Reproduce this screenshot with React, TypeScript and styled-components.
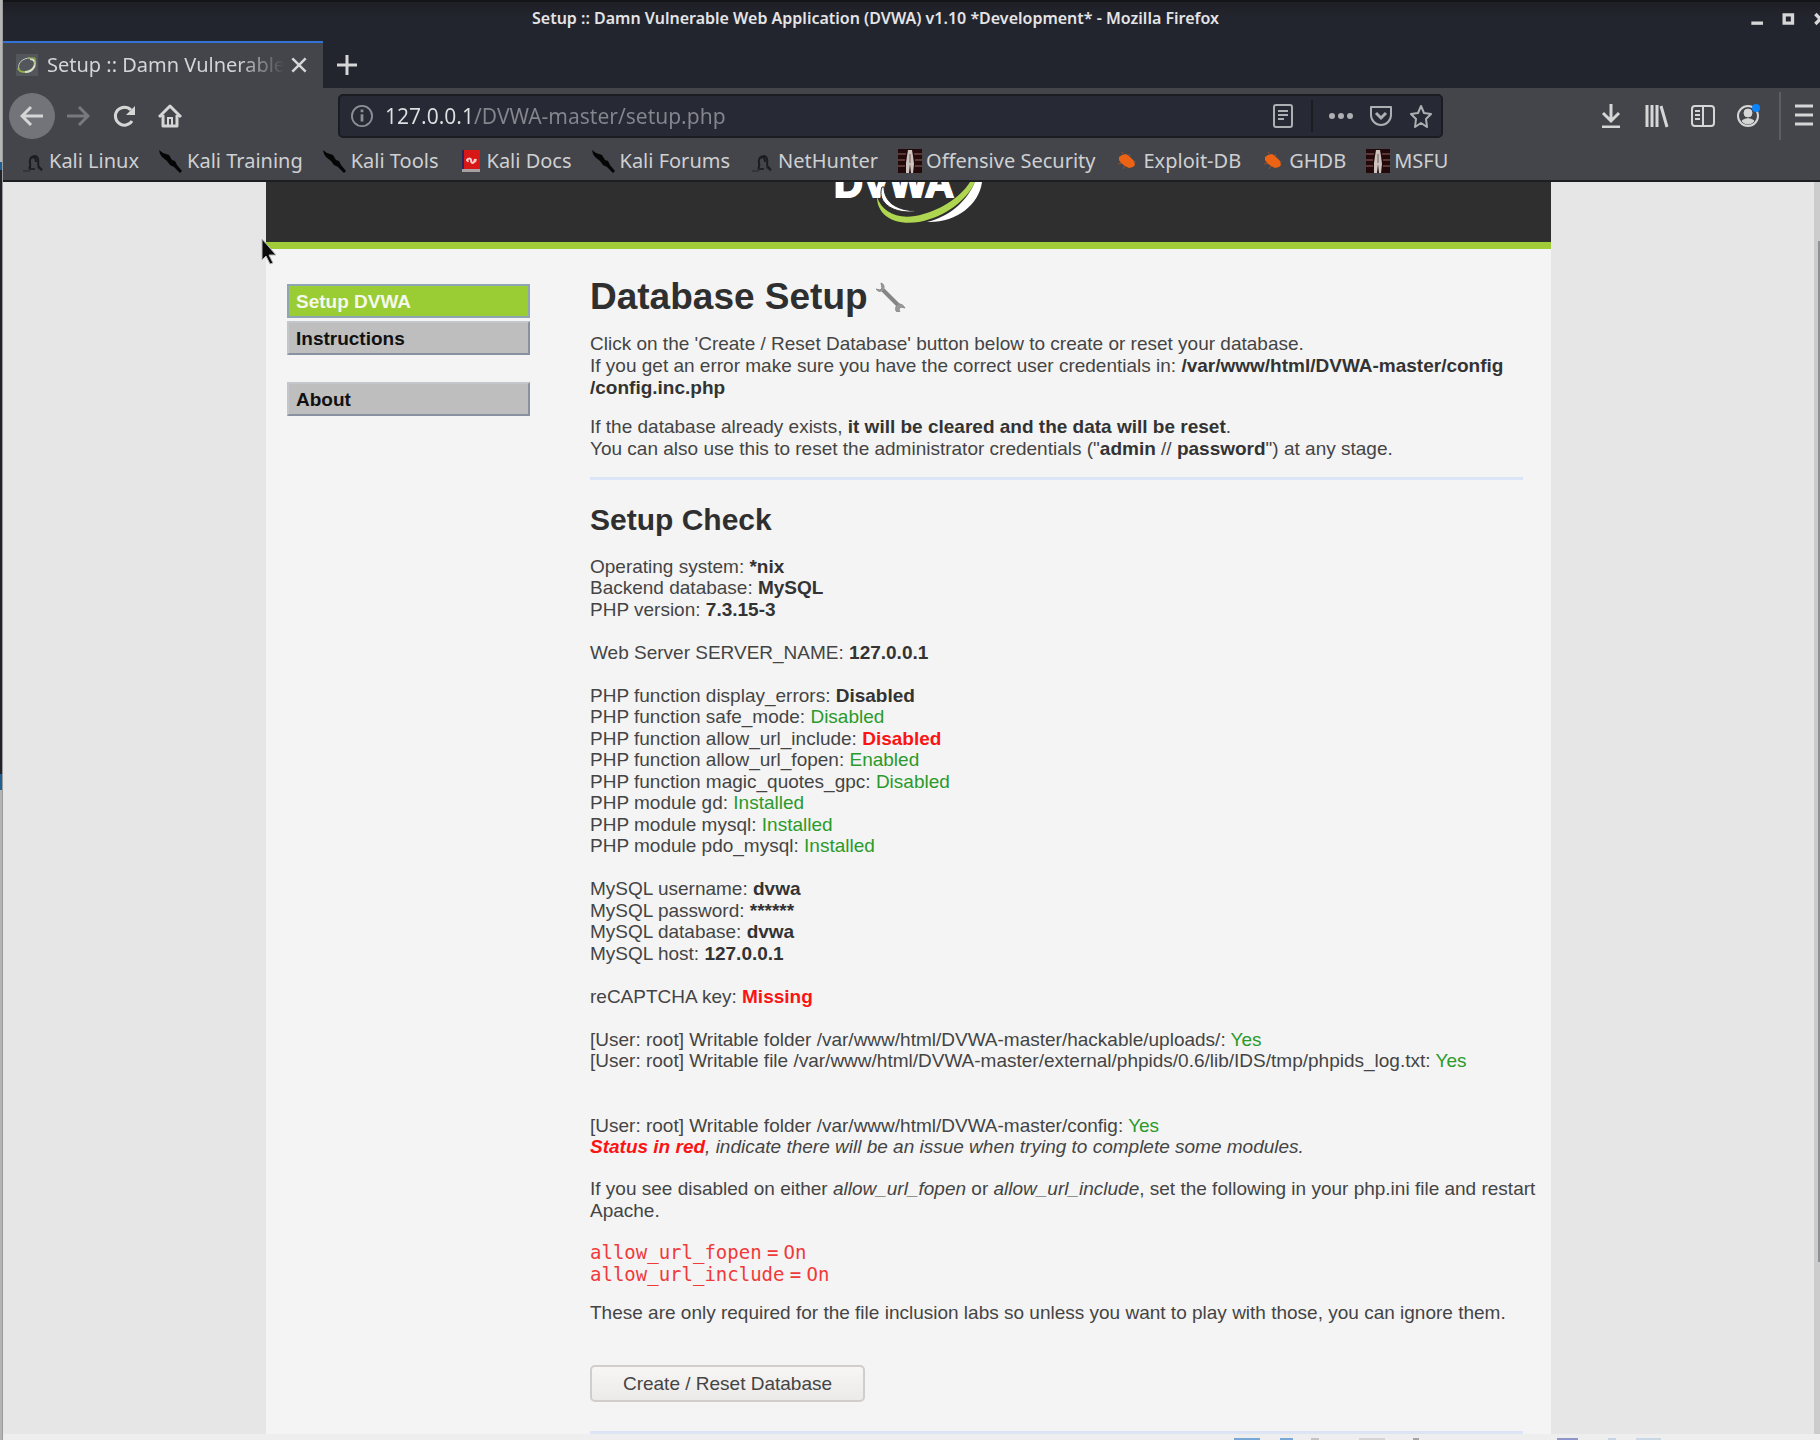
import React from "react";
import styled, { createGlobalStyle, css } from "styled-components";

const ui = `"Noto Sans", "Open Sans", sans-serif`;
const sans = `"Liberation Sans", Arial, Helvetica, sans-serif`;
const mono = `"DejaVu Sans Mono", monospace`;

const GlobalStyle = createGlobalStyle`
  *, *::before, *::after { box-sizing: border-box; }
  body { margin: 0; background: #e6e6e6; font-family: ${sans}; }
`;

/* ---------- desktop and window frame ---------- */

const Desktop = styled.div`
  display: grid;
  grid-template-columns: 3px minmax(0, 1fr);
  height: 100vh;
  overflow: hidden;
`;

const BehindWindow = styled.div`
  border-right: 1px solid #9b9b9b;
  background: linear-gradient(
    to bottom,
    #b5b5b5 0 162px,
    #1d5f92 162px 170px,
    #20222c 170px 774px,
    #1f6193 774px 790px,
    #b4b4b4 790px
  );
`;

const Window = styled.div`
  display: flex;
  flex-direction: column;
  min-height: 0;
`;

const TitleBar = styled.header`
  display: grid;
  grid-template-columns: 1fr auto 1fr 72px;
  align-items: center;
  height: 37px;
  padding-bottom: 3px;
  border-top: 2px solid #131418;
  background: linear-gradient(#1e1f25, #23252e 16px);
  color: #e4e4e6;
`;

const WindowTitle = styled.h1`
  grid-column: 2;
  margin: 0;
  font: 600 16px/24px ${ui};
  white-space: nowrap;
`;

const WindowButtons = styled.div`
  display: flex;
  grid-column: 3 / 5;
  justify-content: flex-end;
  gap: 12px;
  margin-right: -12px;
  padding-top: 2px;
  overflow: hidden;
`;

const IconButton = styled.button<{ $size?: number; $round?: boolean; $tone?: string }>`
  display: inline-flex;
  flex: none;
  align-items: center;
  justify-content: center;
  width: ${(p) => p.$size ?? 46}px;
  height: ${(p) => p.$size ?? 46}px;
  padding: 0;
  border: 0;
  border-radius: ${(p) => (p.$round ? "50%" : "0")};
  background: ${(p) => (p.$round ? "#737479" : "none")};
  color: ${(p) => p.$tone ?? "#d6d6d7"};
`;

const TabStrip = styled.div`
  display: flex;
  align-items: stretch;
  height: 51px;
  padding-top: 4px;
  background: #23252e;
`;

const Tab = styled.div`
  display: flex;
  align-items: center;
  width: 320px;
  padding: 0 10px 2px 13px;
  border-top: 2px solid #3273d8;
  background: #43454b;
  color: #d4d5d7;
`;

const TabLabel = styled.span`
  flex: 1;
  margin-left: 9px;
  overflow: hidden;
  font: 20px/28px ${ui};
  white-space: nowrap;
  mask-image: linear-gradient(to right, #000 80%, transparent);
`;

const NavBar = styled.nav`
  display: flex;
  align-items: center;
  height: 56px;
  padding-left: 6px;
  background: #43454b;
`;

const UrlBar = styled.div`
  display: flex;
  flex: 1;
  align-items: center;
  height: 44px;
  margin: 0 145px;
  padding: 0 0 0 11px;
  border: 2px solid #1b1c21;
  border-radius: 5px;
  background: #272934;
  color: #8e8f95;
`;

const UrlInput = styled.input`
  flex: 1;
  min-width: 0;
  margin-left: 12px;
  padding: 0;
  border: 0;
  outline: 0;
  background: linear-gradient(to right, #dfe0e3 88px, #85868d 88px);
  background-clip: text;
  color: transparent;
  font: 21px/30px ${ui};
`;

const Divider = styled.span<{ $light?: boolean }>`
  flex: none;
  width: 2px;
  height: ${(p) => (p.$light ? 48 : 32)}px;
  background: ${(p) => (p.$light ? "#5c5e64" : "#1b1c22")};
`;

const ReaderSlot = styled.span`
  display: flex;
  gap: 8px;
  align-items: center;
  padding-right: 8px;
`;

const MenuSlot = styled.span`
  display: flex;
  padding-left: 3px;
  margin: 0 -7px 0 4px;
`;

const Bookmarks = styled.nav`
  display: flex;
  align-items: center;
  gap: 20px;
  height: 38px;
  padding: 0 0 2px 18px;
  border-bottom: 2px solid #1d1e21;
  background: #43454b;
`;

const Bookmark = styled.a`
  display: flex;
  align-items: center;
  gap: 4px;
  color: #cfd0d2;
  font: 20px/28px ${ui};
  text-decoration: none;
  white-space: nowrap;
`;

/* ---------- web page ---------- */

const Viewport = styled.div`
  display: grid;
  flex: 1;
  grid-template-columns: minmax(0, 1fr) 6px;
  min-height: 0;
  overflow: hidden;
  background: #e6e6e6;
`;

const ScrollTrack = styled.div`
  display: flex;
  justify-content: flex-end;
  padding-top: 59px;
  background: #cdcccc;
`;

const ScrollThumb = styled.div`
  width: 2px;
  height: 1021px;
  background: #8e9194;
`;

const Site = styled.div`
  max-width: 1285px;
  width: 100%;
  min-height: 0;
  margin: 0 auto;
  background: #f4f4f4;
`;

const SiteHeader = styled.div`
  display: flex;
  justify-content: center;
  height: 67px;
  border-bottom: 7px solid #a0cc38;
  background: #2f2f2f;
`;

const SiteBody = styled.div`
  display: grid;
  grid-template-columns: 243px minmax(0, 1fr);
  column-gap: 60px;
  padding: 30px 28px 0 21px;
`;

const Menu = styled.nav`
  display: flex;
  flex-direction: column;
  gap: 27px;
  padding-top: 5px;
`;

const MenuGroup = styled.div`
  display: flex;
  flex-direction: column;
  gap: 3px;
`;

const MenuLink = styled.a<{ $active?: boolean }>`
  padding: 1px 7px 0;
  border: 2px solid #8c99ab;
  border-color: #c3c6ca #8791a0 #8791a0 #c3c6ca;
  background: #bebebe;
  color: #111;
  font: bold 19px/29px ${sans};
  text-decoration: none;
  ${(p) =>
    p.$active &&
    css`
      border-color: #8fa5b4;
      background: #9acc33;
      color: #f5f8ec;
    `}
`;

const Content = styled.main`
  color: #444;
  font: 19px/21px ${sans};
`;

const PageTitle = styled.h2`
  display: flex;
  align-items: center;
  gap: 8px;
  margin: 0 0 18px;
  color: #2f2f2f;
  font: bold 37px/36px ${sans};
`;

const SectionTitle = styled.h3`
  margin: 22px 0 18px;
  color: #2f2f2f;
  font: bold 30px/36px ${sans};
`;

const Paragraph = styled.div`
  margin-bottom: 17px;
  line-height: 22px;
  white-space: nowrap;
`;

const Rule = styled.hr`
  height: 3px;
  margin: 0;
  border: 0;
  background: #dbe5f5;
`;

const Lines = styled.div`
  margin-bottom: 20px;
  white-space: nowrap;
`;

const Line = styled.div`
  height: 21px;
  &:nth-child(even) {
    height: 22px;
  }
`;

const Strong = styled.b`
  color: #333;
`;

const Status = styled.span<{ $bad?: boolean }>`
  color: ${(p) => (p.$bad ? "#fb1414" : "#2a9a2a")};
  font-weight: ${(p) => (p.$bad ? "bold" : "normal")};
`;

const Config = styled.div`
  margin: 20px 0 16px;
  color: #f03a3a;
  line-height: 22px;
`;

const Code = styled.code`
  font: 19px/21px ${mono};
`;

const ResetButton = styled.button`
  display: block;
  width: 275px;
  height: 37px;
  margin: 41px 0 29px;
  border: 2px solid #d0cdca;
  border-radius: 5px;
  background: linear-gradient(#f7f6f5, #ebeae8);
  color: #444;
  font: 19px/22px ${sans};
`;

const Taskbar = styled.footer`
  display: flex;
  align-items: flex-end;
  height: 6px;
  padding-left: 1231px;
  background: #eee;
`;

const TaskMark = styled.span<{ $w: number; $gap: number; $c: string }>`
  flex: none;
  width: ${(p) => p.$w}px;
  height: 2px;
  margin-right: ${(p) => p.$gap}px;
  background: ${(p) => p.$c};
`;

const Pointer = styled.svg`
  position: absolute;
  left: 261px;
  top: 238px;
`;

/* ---------- icons ---------- */

const Glyph = ({ size = 24, w = 2, children }: { size?: number; w?: number; children: React.ReactNode }) => (
  <svg width={size} height={size} viewBox="0 0 24 24" fill="none" stroke="currentColor" strokeWidth={w} aria-hidden="true">
    {children}
  </svg>
);

const Dragon = () => (
  <svg width="24" height="24" viewBox="0 0 24 24" fill="none" aria-hidden="true">
    <path d="M2 22h6l2-3M21 22l-5-4" stroke="#33353b" strokeWidth="2" />
    <path d="M8 20c3-4 0-5 1-9 1-5 7-5 8-1 1 3-1 5 1 8l3 3M10 9c3-2 5 0 5 4" stroke="#1b1c20" strokeWidth="2" />
    <path d="M8 20h6" stroke="#222328" strokeWidth="2" />
  </svg>
);

const Dagger = () => (
  <svg width="24" height="24" viewBox="0 0 24 24" aria-hidden="true">
    <path d="M0 1l4 3 6 2 3 5 3 1 2 4 5 6-2 2-6-6-4-2-3-4-5-4-2-3z" fill="#050505" />
  </svg>
);

const RedBook = () => (
  <svg width="24" height="24" viewBox="0 0 24 24" aria-hidden="true">
    <path d="M3 1h18v19H3z" fill="#d81717" />
    <path d="M3 1h2v19H3z" fill="#28255b" />
    <path d="M3 20h18v3H3z" fill="#a9a0a3" />
    <path d="M8 12c0-3 4-3 4-1s1 4 3 2l1-3M8 10l1 3M16 13l1-3" fill="none" stroke="#f6cccc" strokeWidth="2" />
  </svg>
);

const Figure = () => (
  <svg width="24" height="24" viewBox="0 0 24 24" aria-hidden="true">
    <path d="M0 0h24v24H0z" fill="#230a0a" />
    <path d="M0 5h8M16 5h8M0 11h7M17 11h7M0 17h7M17 17h7" stroke="#5a3636" strokeWidth="2" />
    <path d="M10 1h4l1 6 1 8-1 9h-2l-1-9-1 9H8V14l1-7z" fill="#cfc5c0" />
    <path d="M12 5v9" stroke="#6d5b57" />
  </svg>
);

const Bug = () => (
  <svg width="24" height="24" viewBox="0 0 24 24" aria-hidden="true">
    <path d="M4 8l3-2 4-1 3 2 3 3 2 2 1 4-2 2-4 1-4-2-4-3-2-3z" fill="#ec6413" />
    <path d="M7 3l2 3M14 5l1 2M3 15l4-1M8 20l2-3M21 13h-2" stroke="#8f5234" strokeWidth="1" />
  </svg>
);

const Logo = () => (
  <svg width="150" height="60" viewBox="0 0 150 60" role="img" aria-label="DVWA">
    <text x="0" y="15" fontFamily="Liberation Sans" fontWeight="bold" fontSize="40" fill="#fff" stroke="#fff" strokeWidth="2">
      DVWA
    </text>
    <path d="M50 5c0 7 3 13 8 17 7 5 16 7 27 7-15 3-29-1-35-9-3-4-4-9-2-15z" fill="#fff" stroke="#2f2f2f" strokeWidth="1" />
    <path d="M43 15c5 14 18 22 38 19 23-4 45-18 55-34h5c-8 18-30 35-56 40-25 4-42-7-42-25z" fill="#afd650" />
    <path d="M148 0c-3 23-26 41-55 40 21-5 39-19 48-40z" fill="#fff" />
  </svg>
);

const Wrench = () => (
  <svg width="30" height="30" viewBox="0 0 30 30" aria-hidden="true">
    <path d="M7 8l16 16" stroke="#858585" strokeWidth="4" />
    <path d="M5 1c3 1 4 4 2 7-2 2-5 2-7-1l4 1 2-2zM20 29c-1-3 0-6 3-7 3 0 5 2 6 4l-4-1-2 2 1 4z" fill="#999" stroke="#8b8b8b" strokeWidth="1" />
  </svg>
);

/* ---------- data ---------- */

const bookmarks: [string, () => React.ReactElement][] = [
  ["Kali Linux", Dragon],
  ["Kali Training", Dagger],
  ["Kali Tools", Dagger],
  ["Kali Docs", RedBook],
  ["Kali Forums", Dagger],
  ["NetHunter", Dragon],
  ["Offensive Security", Figure],
  ["Exploit-DB", Bug],
  ["GHDB", Bug],
  ["MSFU", Figure],
];

type Kind = "bold" | "good" | "bad";
const checks: ([string, string, Kind] | null)[] = [
  ["Operating system:", "*nix", "bold"],
  ["Backend database:", "MySQL", "bold"],
  ["PHP version:", "7.3.15-3", "bold"],
  null,
  ["Web Server SERVER_NAME:", "127.0.0.1", "bold"],
  null,
  ["PHP function display_errors:", "Disabled", "bold"],
  ["PHP function safe_mode:", "Disabled", "good"],
  ["PHP function allow_url_include:", "Disabled", "bad"],
  ["PHP function allow_url_fopen:", "Enabled", "good"],
  ["PHP function magic_quotes_gpc:", "Disabled", "good"],
  ["PHP module gd:", "Installed", "good"],
  ["PHP module mysql:", "Installed", "good"],
  ["PHP module pdo_mysql:", "Installed", "good"],
  null,
  ["MySQL username:", "dvwa", "bold"],
  ["MySQL password:", "******", "bold"],
  ["MySQL database:", "dvwa", "bold"],
  ["MySQL host:", "127.0.0.1", "bold"],
  null,
  ["reCAPTCHA key:", "Missing", "bad"],
  null,
  ["[User: root] Writable folder /var/www/html/DVWA-master/hackable/uploads/:", "Yes", "good"],
  ["[User: root] Writable file /var/www/html/DVWA-master/external/phpids/0.6/lib/IDS/tmp/phpids_log.txt:", "Yes", "good"],
  null,
  null,
  ["[User: root] Writable folder /var/www/html/DVWA-master/config:", "Yes", "good"],
];

const Value = ({ kind, text }: { kind: Kind; text: string }) =>
  kind === "bold" ? <Strong>{text}</Strong> : <Status $bad={kind === "bad"}>{text}</Status>;

const urlIcon = "#aeafb3";

/* ---------- app ---------- */

export default function App() {
  return (
    <Desktop>
      <GlobalStyle />
      <BehindWindow />
      <Window>
        <TitleBar>
          <WindowTitle>Setup :: Damn Vulnerable Web Application (DVWA) v1.10 *Development* - Mozilla Firefox</WindowTitle>
          <WindowButtons>
            <IconButton $size={20} aria-label="Minimize">
              <Glyph size={20} w={4}><path d="M4 17h14" /></Glyph>
            </IconButton>
            <IconButton $size={20} aria-label="Maximize">
              <Glyph size={20} w={4}><path d="M5 7h10v10H5z" /></Glyph>
            </IconButton>
            <IconButton $size={20} aria-label="Close window">
              <Glyph size={20} w={4}><path d="M4 6l12 12M16 6L4 18" /></Glyph>
            </IconButton>
          </WindowButtons>
        </TitleBar>

        <TabStrip>
          <Tab>
            <svg width="22" height="22" viewBox="0 0 22 22" aria-hidden="true">
              <path d="M0 0h22v22H0z" fill="#53565a" />
              <path d="M3 15C1 9 7 4 14 4" fill="none" stroke="#c6c9c4" strokeWidth="1" />
              <path d="M2 14c2 6 12 5 17-2" fill="none" stroke="#91ad4f" strokeWidth="2" />
              <path d="M14 5c5 0 6 4 4 8-2 4-5 5-9 5" fill="none" stroke="#d7dccd" strokeWidth="2" />
              <path d="M12 4h7v7" fill="none" stroke="#93b349" strokeWidth="1" />
            </svg>
            <TabLabel>Setup :: Damn Vulnerable</TabLabel>
            <IconButton $size={28} aria-label="Close tab">
              <Glyph size={20}><path d="M4 4l16 16M20 4L4 20" strokeWidth="3" /></Glyph>
            </IconButton>
          </Tab>
          <IconButton $size={48} aria-label="New tab">
            <Glyph w={3}><path d="M12 2v20M2 12h20" /></Glyph>
          </IconButton>
        </TabStrip>

        <NavBar>
          <IconButton $round aria-label="Back">
            <Glyph w={3}><path d="M23 12H2M11 3l-9 9 9 9" /></Glyph>
          </IconButton>
          <IconButton $tone="#77797e" aria-label="Forward">
            <Glyph w={3}><path d="M1 12h21M13 3l9 9-9 9" /></Glyph>
          </IconButton>
          <IconButton aria-label="Reload">
            <Glyph w={3}>
              <path d="M20 17a9 9 0 1 1-1-11" />
              <path d="M23 2v9h-9z" fill="currentColor" stroke="none" />
            </Glyph>
          </IconButton>
          <IconButton aria-label="Home">
            <Glyph w={3}>
              <path d="M1 13L12 2l11 11M5 11v11h14V11" strokeLinejoin="round" />
              <path d="M10 22v-8h4v8" strokeWidth="2" />
            </Glyph>
          </IconButton>

          <UrlBar>
            <Glyph size={22}>
              <circle cx="12" cy="12" r="11" />
              <path d="M12 10v8M12 5v3" strokeWidth="3" />
            </Glyph>
            <UrlInput aria-label="Address" defaultValue="127.0.0.1/DVWA-master/setup.php" />
            <ReaderSlot>
              <IconButton $size={40} $tone={urlIcon} aria-label="Reader view">
                <Glyph>
                  <rect x="3" y="1" width="18" height="22" rx="2" />
                  <path d="M7 7h10M7 11h10M7 15h6" />
                </Glyph>
              </IconButton>
              <Divider />
            </ReaderSlot>
            <IconButton $size={40} $tone={urlIcon} aria-label="Page actions">
              <Glyph>
                <g fill="currentColor" stroke="none">
                  <circle cx="3" cy="12" r="3" /><circle cx="12" cy="12" r="3" /><circle cx="21" cy="12" r="3" />
                </g>
              </Glyph>
            </IconButton>
            <IconButton $size={40} $tone={urlIcon} aria-label="Save to Pocket">
              <Glyph>
                <path d="M2 3h20v8a10 10 0 0 1-20 0z" strokeLinejoin="round" />
                <path d="M7 9l5 5 5-5" strokeWidth="3" />
              </Glyph>
            </IconButton>
            <IconButton $size={40} $tone={urlIcon} aria-label="Bookmark this page">
              <Glyph>
                <path d="M12 2l3 7 7 1-5 5 1 8-6-4-6 4 1-8-5-5 7-1z" strokeLinejoin="round" />
              </Glyph>
            </IconButton>
          </UrlBar>

          <IconButton aria-label="Downloads">
            <Glyph><path d="M12 0v17M4 9l8 8 8-8M3 23h18" strokeWidth="3" /></Glyph>
          </IconButton>
          <IconButton aria-label="Library">
            <Glyph><path d="M2 1v22M7 1v22M12 1v22M16 2l6 21" strokeWidth="3" /></Glyph>
          </IconButton>
          <IconButton aria-label="Sidebars">
            <Glyph>
              <rect x="1" y="2" width="22" height="20" rx="3" />
              <path d="M12 2v20" /><path d="M4 7h5M4 11h5M4 15h5" />
            </Glyph>
          </IconButton>
          <IconButton aria-label="Account">
            <Glyph w={1}>
              <circle cx="11" cy="12" r="10" strokeWidth="2" />
              <circle cx="11" cy="9" r="4" fill="currentColor" />
              <path d="M5 17c3-3 9-3 12 0-3 4-9 4-12 0z" fill="currentColor" />
              <circle cx="19" cy="4" r="4" fill="#0a84ff" stroke="none" />
            </Glyph>
          </IconButton>
          <MenuSlot>
            <Divider $light />
            <IconButton aria-label="Open menu">
              <Glyph w={3}><path d="M3 3h18M3 12h18M3 21h18" /></Glyph>
            </IconButton>
          </MenuSlot>
        </NavBar>

        <Bookmarks aria-label="Bookmarks">
          {bookmarks.map(([label, Icon]) => (
            <Bookmark href="#" key={label}>
              <Icon />
              {label}
            </Bookmark>
          ))}
        </Bookmarks>

        <Viewport>
          <Site>
            <SiteHeader>
              <Logo />
            </SiteHeader>
            <SiteBody>
              <Menu aria-label="DVWA">
                <MenuGroup>
                  <MenuLink href="#" $active>Setup DVWA</MenuLink>
                  <MenuLink href="#">Instructions</MenuLink>
                </MenuGroup>
                <MenuGroup>
                  <MenuLink href="#">About</MenuLink>
                </MenuGroup>
              </Menu>

              <Content>
                <PageTitle>
                  Database Setup
                  <Wrench />
                </PageTitle>
                <Paragraph>
                  <div>Click on the 'Create / Reset Database' button below to create or reset your database.</div>
                  <div>
                    If you get an error make sure you have the correct user credentials in:{" "}
                    <Strong>/var/www/html/DVWA-master/config</Strong>
                  </div>
                  <Strong>/config.inc.php</Strong>
                </Paragraph>
                <Paragraph>
                  <div>
                    If the database already exists, <Strong>it will be cleared and the data will be reset</Strong>.
                  </div>
                  <div>
                    You can also use this to reset the administrator credentials ("<Strong>admin</Strong> //{" "}
                    <Strong>password</Strong>") at any stage.
                  </div>
                </Paragraph>
                <Rule />

                <SectionTitle>Setup Check</SectionTitle>
                <Lines>
                  {checks.map((c, i) => (
                    <Line key={i}>
                      {c && (
                        <>
                          {c[0]} <Value kind={c[2]} text={c[1]} />
                        </>
                      )}
                    </Line>
                  ))}
                  <Line>
                    <i>
                      <Status $bad>Status in red</Status>, indicate there will be an issue when trying to complete some modules.
                    </i>
                  </Line>
                </Lines>
                <Paragraph>
                  <div>
                    If you see disabled on either <i>allow_url_fopen</i> or <i>allow_url_include</i>, set the following in
                    your php.ini file and restart
                  </div>
                  <div>Apache.</div>
                </Paragraph>
                <Config>
                  <Code>allow_url_fopen</Code> <Code>=</Code> <Code>On</Code>
                  <br />
                  <Code>allow_url_include</Code> <Code>=</Code> <Code>On</Code>
                </Config>
                <Paragraph>
                  These are only required for the file inclusion labs so unless you want to play with those, you can ignore them.
                </Paragraph>
                <ResetButton type="button">Create / Reset Database</ResetButton>
                <Rule />
              </Content>
            </SiteBody>
          </Site>
          <ScrollTrack>
            <ScrollThumb />
          </ScrollTrack>
        </Viewport>

        <Taskbar>
          <TaskMark $w={26} $gap={20} $c="#7aa8d6" />
          <TaskMark $w={13} $gap={18} $c="#7aa8d6" />
          <TaskMark $w={8} $gap={40} $c="#c4c4c4" />
          <TaskMark $w={26} $gap={28} $c="#d4d4d4" />
          <TaskMark $w={6} $gap={138} $c="#a4a4a4" />
          <TaskMark $w={21} $gap={30} $c="#9295cb" />
          <TaskMark $w={8} $gap={20} $c="#c5d5e4" />
          <TaskMark $w={25} $gap={0} $c="#c9d8e4" />
        </Taskbar>
      </Window>
      <Pointer width="18" height="28" viewBox="0 0 18 28" aria-hidden="true">
        <path d="M1 1v21l4-4 4 8 3-1-4-8h7z" fill="#0b0b0b" stroke="#b9b9b9" strokeWidth="1" />
      </Pointer>
    </Desktop>
  );
}
